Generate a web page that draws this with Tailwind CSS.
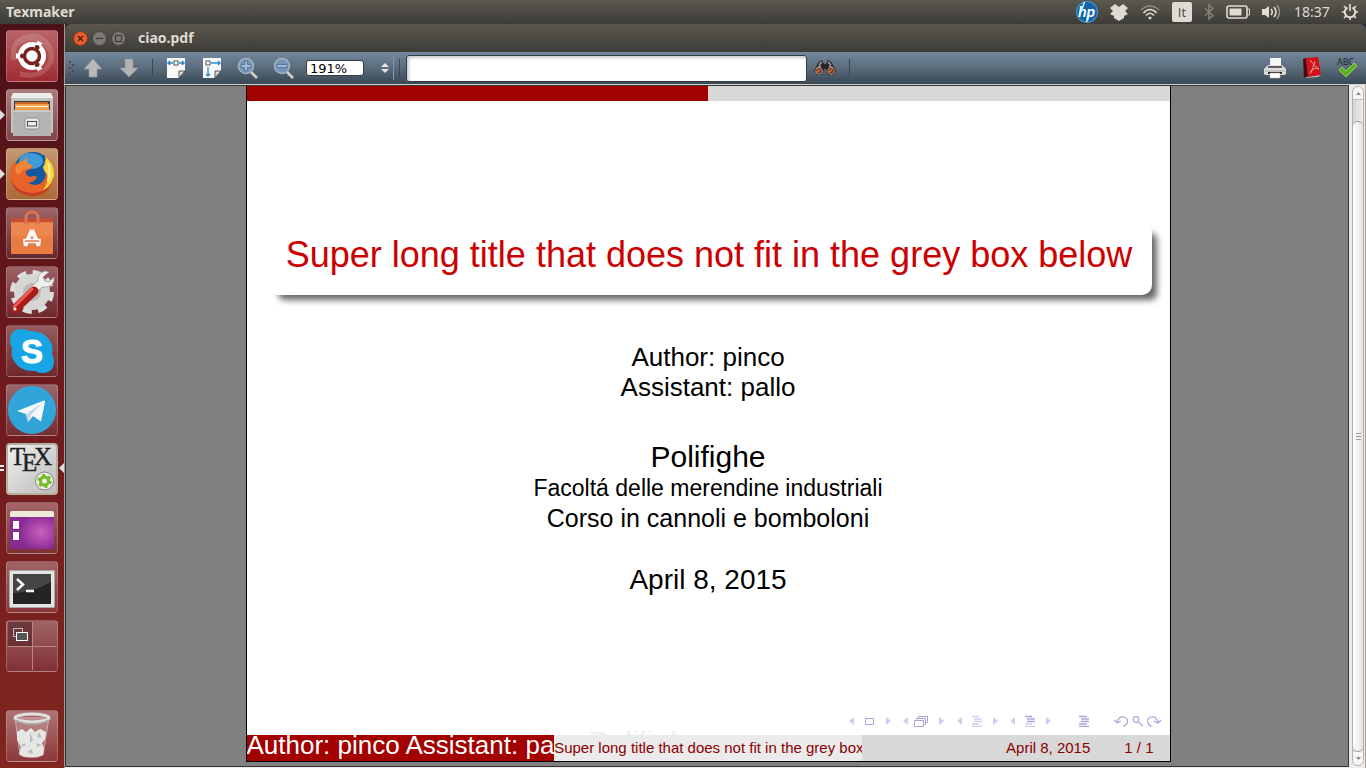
<!DOCTYPE html>
<html lang="it">
<head>
    <meta charset="UTF-8">
    <meta name="viewport" content="width=device-width, initial-scale=1.0">
    <title>Texmaker - ciao.pdf</title>
    <script src="https://cdn.jsdelivr.net/npm/@tailwindcss/browser@4"></script>
</head>
<body class="h-screen flex flex-col overflow-hidden bg-[#3c3b37] font-['Noto_Sans',sans-serif]">
    <!-- Top panel -->
    <header class="h-6 shrink-0 flex items-center justify-between pl-[6px] pr-2 bg-linear-to-b from-[#5b5850] to-[#3d3c37] text-[#dfdbd2]">
        <h1 class="text-[14px] leading-6 font-bold">Texmaker</h1>
        <div class="flex items-center gap-3">
            <svg class="w-[22px] h-[22px]" viewBox="0 0 22 22"><circle cx="11" cy="11" r="11" fill="#4d94cb"/><circle cx="11" cy="11" r="10" fill="#0f66ad"/><path d="M8.500 1 6 8M13 14 10.500 21" stroke="#e8f2fa" stroke-width="1.500"/><text x="10.500" y="15.500" text-anchor="middle" font-family="Liberation Sans" font-style="italic" font-weight="bold" font-size="14" fill="#fff">hp</text></svg>
            <svg class="w-[18px] h-[18px]" viewBox="0 0 18 18" fill="#dfdbd2"><path d="M5 1 9 4 13 1 18 5 15 8 18 11 14 13V15L9 18 4 15V13L0 11 3 8 0 5Z"/></svg>
            <svg class="w-5 h-5" viewBox="0 0 20 20" fill="none" stroke="#dfdbd2" stroke-width="1.6"><path d="M1 8Q10 0 19 8" stroke="#8f8c84"/><path d="M3.500 11Q10 4 16.500 11"/><path d="M6 13.500Q10 9 14 13.500"/><path d="M8 15.500 10 18 12 15.500Q10 14 8 15.500Z" fill="#dfdbd2" stroke="none"/></svg>
            <span class="w-5 h-5 rounded-xs bg-[#dfdbd2] text-[#45443f] text-[13px] leading-5 text-center font-['Open_Sans',sans-serif]">It</span>
            <svg class="w-[10px] h-4" viewBox="0 0 10 16" fill="none" stroke="#85827a" stroke-width="1.5"><path d="M1 4.500 9 11.500 5 15V1L9 4.500 1 11.500"/></svg>
            <svg class="w-6 h-[14px]" viewBox="0 0 24 14"><rect x="1" y="1" width="20" height="12" rx="2" fill="none" stroke="#dfdbd2" stroke-width="1.6"/><rect x="3.500" y="3.500" width="12" height="7" fill="#dfdbd2"/><path d="M21 4H23.500V10H21" fill="none" stroke="#dfdbd2"/></svg>
            <svg class="w-5 h-4" viewBox="0 0 20 16"><path d="M0 5H3L7 2V14L3 11H0Z" fill="#dfdbd2"/><path d="M9 5Q11.500 8 9 11M12 3Q16 8 12 13" fill="none" stroke="#dfdbd2" stroke-width="1.6"/><path d="M15 1Q20 8 15 15" fill="none" stroke="#99968d" stroke-width="1.4"/></svg>
            <time class="w-9 text-[14px] leading-6">18:37</time>
            <svg class="w-4 h-4" viewBox="0 0 16 16" fill="none" stroke="#dfdbd2"><path d="M5.500 3.500A5.200 5.200 0 1 0 10.500 3.500" stroke-width="2"/><path d="M8 0V7M0 8H3M13 8H16M8 13V16M2 2 4 4M14 2 12 4M2 14 4.500 11.500M14 14 11.500 11.500" stroke-width="1.700"/></svg>
        </div>
    </header>

    <div class="flex flex-1 min-h-0">
        <!-- Launcher -->
        <nav class="relative w-[65px] shrink-0 flex flex-col gap-[7px] px-[6px] py-[6px] bg-linear-to-b from-[#4b1116] via-[#701a1e] to-[#80261f] border-r border-[#a69792]">
            <button class="size-[52px] shrink-0 rounded-[4px] border border-white/20 bg-linear-to-b from-[#b86468] to-[#a02a31]" aria-label="Dash">
                <svg class="size-[50px]" viewBox="1 1 50 50" fill="none"><path d="M8 30Q4 6 30 6Q48 12 45 34M14 44Q40 50 46 26M10 14Q30 0 44 20" stroke="#fff" stroke-opacity=".15" stroke-width="5"/><circle cx="26" cy="26" r="14" fill="#fff"/><circle cx="26" cy="26" r="7.500" stroke="#772022" stroke-width="3.500"/><path d="M18 26H10M30 19 34 12M30 33 34 40" stroke="#fff" stroke-width="5"/><circle cx="16.500" cy="26" r="2.500" fill="#772022"/><circle cx="31" cy="17.500" r="2.500" fill="#772022"/><circle cx="31" cy="34.500" r="2.500" fill="#772022"/></svg>
            </button>
            <button class="size-[52px] shrink-0 rounded-[4px] border border-white/25 bg-linear-to-b from-[#ac7b7a] to-[#82464a]" aria-label="File">
                <svg class="size-[50px]" viewBox="1 1 50 50"><path d="M7 4H45L47 9V44H5V9Z" fill="#c3c3c1"/><path d="M7 4H45L47 9H5Z" fill="#ededeb"/><rect x="8" y="12" width="36" height="13" fill="#3c3b37"/><rect x="9" y="13" width="33" height="8" fill="#c9672c"/><rect x="9" y="15" width="34" height="8" fill="#f0a04d"/><path d="M10 17.500H42" stroke="#fff3d8"/><path d="M7 21H45V47H7Z" fill="#b4b4b2"/><path d="M7 22H45" stroke="#ddd"/><rect x="19" y="29" width="14" height="11" rx="2" fill="#e7e7e7" stroke="#909090"/><rect x="21.500" y="32.500" width="9" height="4.500" fill="#eee" stroke="#444"/></svg>
            </button>
            <button class="size-[52px] shrink-0 rounded-[4px] border border-white/25 bg-linear-to-b from-[#c39871] to-[#ab6937]" aria-label="Firefox">
                <svg class="size-[50px]" viewBox="1 1 50 50"><circle cx="27" cy="23" r="19" fill="#1459a0"/><ellipse cx="25" cy="13" rx="12" ry="8" fill="#3c9bd8"/><path d="M42 9Q50 20 47 32Q42 48 26 48Q8 47 4 30Q3 20 9 13L10 17Q14 13 17 13L21 9V15L27 18Q26 21 20 23Q19 27 24 29Q28 27 31 29Q29 34 22 35Q32 40 38 32Q42 24 38 14Z" fill="#e8622a"/><path d="M39 8Q49 16 48 28L45 35Q42 40 37 42Q43 34 41 26Q38 24 37 19Q41 14 39 8Z" fill="#fbd338"/><path d="M42 15Q45 24 42 33" fill="none" stroke="#fff0a0" stroke-width="2"/><path d="M4 30Q10 45 28 45Q40 44 46 35Q41 48 26 48Q8 47 4 30Z" fill="#c33f20"/><path d="M10 17Q14 13 17 13L21 9V15L27 18Q24 21 18 21L12 27Q8 24 10 17Z" fill="#f08636"/></svg>
            </button>
            <button class="size-[52px] shrink-0 rounded-[4px] border border-white/20 bg-linear-to-b from-[#9b6668] to-[#62272b]" aria-label="Ubuntu Software Center">
                <svg class="size-[50px]" viewBox="1 1 50 50"><path d="M5 11H47V47H5Z" fill="#e97a42"/><path d="M5 11H47V15H5Z" fill="#c15132"/><path d="M5 16H47V29H5Z" fill="#ed8752"/><path d="M20 17V11Q20 5 26 5Q32 5 32 11V17" fill="none" stroke="#dc7353" stroke-width="3"/><path d="M26 23 19 39M26 23 33 39" fill="none" stroke="#fff" stroke-width="4"/><path d="M18 32.500H34V35.500H18Z" fill="#e97a42" stroke="#fff" stroke-width="1.500"/></svg>
            </button>
            <button class="size-[52px] shrink-0 rounded-[4px] border border-white/20 bg-linear-to-b from-[#9c6266] to-[#6d282d]" aria-label="Impostazioni">
                <svg class="size-[50px]" viewBox="1 1 50 50"><circle cx="26" cy="26" r="18.500" fill="none" stroke="#dededc" stroke-width="7" stroke-dasharray="8.500 6.030"/><circle cx="26" cy="26" r="13" fill="none" stroke="#d6d6d4" stroke-width="10"/><circle cx="26" cy="26" r="9" fill="#b9b9b7"/><path d="M29 28 23 22 32 15Q31 7 39 5L43 6 37 11 39 15 43 16 48 11Q49 19 41 21L36 21Z" fill="#efefed" stroke="#999" stroke-width=".8"/><path d="M9 43 28 25" stroke="#a91c18" stroke-width="9" stroke-linecap="round"/><path d="M8 41 26 23" stroke="#eb5d53" stroke-width="3" stroke-linecap="round"/><circle cx="9" cy="43" r="1.500" fill="#fff"/></svg>
            </button>
            <button class="size-[52px] shrink-0 rounded-[4px] border border-white/20 bg-linear-to-b from-[#975c60] to-[#6d282c]" aria-label="Skype">
                <svg class="size-[50px]" viewBox="1 1 50 50"><path d="M4 16Q4 4 16 4Q20 4 23 6Q40 5 46 20Q47 25 46 29Q48 32 48 36Q48 48 36 48Q32 48 29 46Q12 47 6 32Q5 27 6 23Q4 20 4 16Z" fill="#18a5e3"/><text x="26" y="37.500" text-anchor="middle" font-family="Liberation Sans" font-weight="bold" font-size="33" fill="#fff" stroke="#fff">S</text></svg>
            </button>
            <button class="size-[52px] shrink-0 rounded-[4px] border border-white/20 bg-linear-to-b from-[#98676a] to-[#742c30]" aria-label="Telegram">
                <svg class="size-[50px]" viewBox="1 1 50 50"><circle cx="26" cy="26" r="24" fill="#31a5da"/><path d="M11 27 38 16.500Q39.500 16.500 39 18L35 37.500 27 32 22 38 20 30Z" fill="#f5f8fa"/><path d="M20 30 36 19 25 31 22 38Z" fill="#c5d8e4"/></svg>
            </button>
            <button class="size-[52px] shrink-0 rounded-[4px] border-2 border-[#b6ae9f] bg-linear-to-br from-[#f0f0ef] to-[#bbbbb9]" aria-label="Texmaker">
                <svg class="size-[48px]" viewBox="2 2 48 48"><g font-family="Liberation Serif" font-size="25" fill="#222" stroke="#222" stroke-width=".4"><text x="4" y="22">T</text><text x="16" y="28">E</text><text x="28" y="22">X</text></g><circle cx="38.500" cy="38" r="9" fill="#eee" stroke="#888"/><circle cx="38.500" cy="38" r="4" fill="none" stroke="#75bd22" stroke-width="3"/><circle cx="38.500" cy="38" r="6" fill="none" stroke="#75bd22" stroke-width="2.500" stroke-dasharray="3 3.280"/></svg>
            </button>
            <button class="size-[52px] shrink-0 rounded-[4px] border border-white/20 bg-linear-to-b from-[#a26669] to-[#7d3135]" aria-label="Desktop">
                <svg class="size-[50px]" viewBox="1 1 50 50"><defs><radialGradient id="wall" cx=".7" cy=".55"><stop offset="0" stop-color="#c961bb"/><stop offset="1" stop-color="#882a92"/></radialGradient></defs><rect x="4" y="10" width="44" height="37" rx="2" fill="url(#wall)"/><path d="M4 15V11Q4 9 6 9H46Q48 9 48 11V15Z" fill="#eeeadb"/><path d="M7 19H13V27H7ZM7 30H13V38H7Z" fill="#fff"/></svg>
            </button>
            <button class="size-[52px] shrink-0 rounded-[4px] border border-white/20 bg-linear-to-b from-[#a26365] to-[#863438]" aria-label="Terminale">
                <svg class="size-[50px]" viewBox="1 1 50 50"><rect x="3.500" y="9.500" width="45" height="37" rx="1" fill="#e4e4e2" stroke="#aaa"/><rect x="7" y="13" width="38" height="30" fill="#242522"/><path d="M7 13H45V21Q26 32 7 32Z" fill="#454643"/><path d="M11 18 17 23.500 11 29M20 30H28" fill="none" stroke="#fff" stroke-width="2.500"/></svg>
            </button>
            <button class="size-[52px] shrink-0 rounded-[4px] border border-white/20 bg-linear-to-b from-[#a06466] to-[#803034]" aria-label="Aree di lavoro">
                <svg class="size-[50px]" viewBox="1 1 50 50" fill="none"><rect x="2" y="2" width="24" height="25" fill="#4c2024" fill-opacity=".6"/><path d="M26.500 2V50M2 26.500H50" stroke="#bd8586"/><rect x="7.500" y="8.500" width="9" height="8" stroke="#bbb"/><rect x="10.500" y="12.500" width="11" height="8" fill="#555" stroke="#fff"/></svg>
            </button>
            <button class="size-[52px] shrink-0 mt-auto rounded-[4px] border border-white/20 bg-linear-to-b from-[#ad7374] to-[#8d373a]" aria-label="Cestino">
                <svg class="size-[50px]" viewBox="1 1 50 50"><path d="M9 8 14 45Q26 50 37 45L43 8Z" fill="#e5dada" fill-opacity=".25" stroke="#d9c9c9" stroke-width=".7"/><path d="M11 22 16 19 20 22 25 18 29 22 34 19 40 22 39 29 36 33 38 38 37 45 31 47H18L13 44 15 37 11 30Z" fill="#e6e6e4"/><path d="M24 22 27 30 24 33ZM15 35 20 33 18 37ZM30 33 36 35 31 37ZM21 42 26 39 27 44ZM33 22 36 28 31 27Z" fill="#bcbcba"/><ellipse cx="26" cy="8" rx="17" ry="4" fill="none" stroke="#e1e1df" stroke-width="3"/><path d="M9 10Q26 18 43 10" fill="none" stroke="#aaa" stroke-width="1.500"/></svg>
            </button>

            <!-- Running markers -->
            <svg class="absolute left-0 top-[86px] w-[5px] h-[10px]" viewBox="0 0 5 10"><path d="M0 0 5 5 0 10Z" fill="#dedede"/></svg>
            <svg class="absolute left-0 top-[145px] w-[5px] h-[10px]" viewBox="0 0 5 10"><path d="M0 0 5 5 0 10Z" fill="#dedede"/></svg>
            <svg class="absolute left-0 top-[439px] w-[5px] h-[10px]" viewBox="0 0 5 10"><path d="M0 3H4M0 7H4" stroke="#eee" stroke-width="2"/></svg>
            <svg class="absolute right-0 top-[439px] w-[5px] h-[10px]" viewBox="0 0 5 10"><path d="M5 0 0 5 5 10Z" fill="#dedede"/></svg>
        </nav>

        <!-- PDF viewer window -->
        <section class="flex-1 min-w-0 flex flex-col bg-[#272a35]">
            <div class="h-7 shrink-0 flex items-center gap-1 pl-2 rounded-t-md bg-linear-to-b from-[#5a574f] to-[#3d3c37] text-[#dfdbd2]">
                <button class="size-[15px] rounded-full bg-[#e95c2b] border border-[#7e3519]" aria-label="Chiudi"><svg viewBox="0 0 13 13"><path d="M4 4 9 9M9 4 4 9" stroke="#3c2015" stroke-width="1.300"/></svg></button>
                <button class="size-[15px] rounded-full bg-[#7b7972] border border-[#45433d]" aria-label="Riduci"><svg viewBox="0 0 13 13"><path d="M3 6.500H10" stroke="#3c3b37" stroke-width="1.200"/></svg></button>
                <button class="size-[15px] rounded-full bg-[#7b7972] border border-[#45433d]" aria-label="Massimizza"><svg viewBox="0 0 13 13"><rect x="3.500" y="3.500" width="6" height="6" fill="none" stroke="#3c3b37" stroke-width="1.200"/></svg></button>
                <h2 class="ml-2 text-[14px] leading-7 font-bold">ciao.pdf</h2>
            </div>

            <div class="h-8 shrink-0 flex items-center bg-linear-to-b from-[#73899f] from-0% via-[#5a6b7b] via-50% to-[#394855]">
                <svg class="w-[10px] h-6 shrink-0" viewBox="0 0 10 24"><path d="M4 5h2v2H4zM4 11h2v2H4zM4 17h2v2H4zM7 8h2v2H7zM7 14h2v2H7z" fill="#3f4d5a"/></svg>
                <button class="w-9 h-8 flex items-center justify-center" aria-label="Pagina precedente"><svg class="w-5 h-5" viewBox="0 0 20 20"><path d="M10 1 19 11H14V19H6V11H1Z" fill="#b9b9b9" stroke="#8f9499" stroke-width=".7"/></svg></button>
                <button class="w-9 h-8 flex items-center justify-center" aria-label="Pagina successiva"><svg class="w-5 h-5" viewBox="0 0 20 20"><path d="M10 19 19 10H14V1H6V10H1Z" fill="#b2b2b2" stroke="#8f9499" stroke-width=".7"/></svg></button>
                <span class="w-px h-[18px] ml-[5px] mr-[5px] bg-[#3b4956]"></span>
                <button class="w-9 h-8 flex items-center justify-center" aria-label="Adatta alla larghezza"><svg class="w-[18px] h-5" viewBox="0 0 18 20"><path d="M0 0H18V13L12 20H0Z" fill="#f8f8f8"/><path d="M12 20V13H18Z" fill="#ddd" stroke="#333" stroke-width=".8"/><path d="M1 5H6M12 5H17M3 3 1 5 3 7M15 3 17 5 15 7" fill="none" stroke="#2589d8" stroke-width="1.300"/><rect x="7" y="3" width="4" height="4" fill="#fff" stroke="#555"/></svg></button>
                <button class="w-9 h-8 flex items-center justify-center" aria-label="Adatta alla pagina"><svg class="w-[18px] h-5" viewBox="0 0 18 20"><path d="M0 0H18V13L12 20H0Z" fill="#f8f8f8"/><path d="M12 20V13H18Z" fill="#ddd" stroke="#333" stroke-width=".8"/><path d="M8 5H17M15 3 17 5 15 7M5 9V18M3 16 5 18 7 16" fill="none" stroke="#2589d8" stroke-width="1.300"/><rect x="3" y="3" width="4" height="4" fill="#fff" stroke="#555"/></svg></button>
                <button class="w-9 h-8 flex items-center justify-center" aria-label="Ingrandisci"><svg class="w-[22px] h-[22px]" viewBox="0 0 22 22"><path d="M14 15 20 21" stroke="#d7d0c5" stroke-width="2.500"/><circle cx="9" cy="9" r="7.500" fill="#7593b8" stroke="#a5b4c3" stroke-width="1.500"/><path d="M4 7.500H7.500V4H10.500V7.500H14V10.500H10.500V14H7.500V10.500H4Z" fill="#a0b9d2" stroke="#4e6f98" stroke-width=".8"/></svg></button>
                <button class="w-9 h-8 flex items-center justify-center" aria-label="Riduci"><svg class="w-[22px] h-[22px]" viewBox="0 0 22 22"><path d="M14 15 20 21" stroke="#d7d0c5" stroke-width="2.500"/><circle cx="9" cy="9" r="7.500" fill="#7593b8" stroke="#a5b4c3" stroke-width="1.500"/><path d="M4 7.500H14V10.500H4Z" fill="#a0b9d2" stroke="#4e6f98" stroke-width=".8"/></svg></button>
                <input type="text" value="191%" aria-label="Zoom" class="w-[58px] h-4 ml-1 pl-[3px] rounded-[3px] border border-[#343c43] bg-white text-black text-[13px] leading-[14px] font-['DejaVu_Sans',sans-serif]">
                <button class="ml-[15px] w-3 h-8 flex items-center justify-center" aria-label="Cambia zoom"><svg class="w-2 h-[10px]" viewBox="0 0 8 10"><path d="M4 0 8 4H0ZM0 6H8L4 10Z" fill="#e5e5e5"/></svg></button>
                <span class="w-px h-6 ml-[2px] bg-[#8296a9]"></span>
                <span class="w-px h-[18px] ml-[5px] bg-[#3b4956]"></span>
                <input type="search" aria-label="Cerca" class="w-[401px] h-[27px] ml-[6px] px-1 rounded-[3px] border border-[#343c43] bg-white shadow-[inset_2px_2px_3px_#ccc] text-[13px]">
                <button class="w-9 h-8 flex items-center justify-center" aria-label="Trova"><svg class="w-[22px] h-4" viewBox="0 0 22 16"><path d="M4 3 8 0 10 4H12L14 0 18 3 22 11 19 15H14L12 9H10L8 15H3L0 11Z" fill="#282624"/><path d="M5 5 8 2M14 2 17 5M3 8 7 6M15 6 19 8" stroke="#a9a7a4" stroke-width="1.500"/><circle cx="5" cy="11" r="3.300" fill="#8c3324" stroke="#a39588"/><circle cx="17" cy="11" r="3.300" fill="#8c3324" stroke="#a39588"/><path d="M3 12 6 10M15 12 18 10" stroke="#e7a24c"/></svg></button>
                <span class="w-px h-[18px] ml-[6px] bg-[#3b4956]"></span>
                <div class="flex ml-auto pr-px">
                    <button class="w-9 h-8 flex items-center justify-center" aria-label="Stampa"><svg class="w-[22px] h-[22px]" viewBox="0 0 22 22"><path d="M6 1H17V10H6Z" fill="#f7f7f7"/><path d="M4 8H18L22 12V17L20 18H2L0 17V12Z" fill="#dedede"/><path d="M4 10H18" stroke="#333" stroke-width="1.500"/><path d="M1 14H21" stroke="#aaa"/><path d="M4 16H18" stroke="#222" stroke-width="2"/><path d="M6 16H16V21H6Z" fill="#fff" stroke="#bbb" stroke-width=".5"/></svg></button>
                    <button class="w-9 h-8 flex items-center justify-center" aria-label="Visualizzatore esterno"><svg class="w-[19px] h-[22px]" viewBox="0 0 19 22"><path d="M1 2 4 1 6 19 2 21Z" fill="#49090b"/><path d="M4 1 16 0 19 18 6 20Z" fill="#d30f17"/><path d="M2 21 6 20 19 18 16 20Z" fill="#bbb"/><path d="M8 3Q12 9 17 12M13 4Q11 12 8 17M8 15Q12 10 17 12" fill="none" stroke="#f2a8a4" stroke-width=".9"/></svg></button>
                    <button class="w-9 h-8 flex items-center justify-center" aria-label="Controllo ortografico"><svg class="w-[22px] h-[22px]" viewBox="0 0 22 22"><text x="1" y="8" font-family="Noto Sans" font-size="9" fill="#1c252d">ABC</text><path d="M3 13 6 10 10 14 18 6 21 9 10 20Z" fill="#58b51c" stroke="#a4dc68" stroke-width=".8"/></svg></button>
                </div>
            </div>

            <div class="flex-1 min-h-0 flex border-t border-[#d5d2cc] bg-[#eceae8]">
                <!-- Canvas -->
                <main class="flex-1 min-w-0 mb-px flex justify-center border border-[#353535] bg-[#808080] pl-[2px] pb-1">
                    <article class="relative w-[925px] flex flex-col border-x border-b border-black bg-white text-black font-['Liberation_Sans',Arial,sans-serif]">
                        <div class="h-[15px] shrink-0 flex">
                            <div class="w-1/2 bg-[#a30000]"></div>
                            <div class="w-1/2 bg-[#d8d8d8]"></div>
                        </div>
                        <div class="mt-[121px] ml-5 mr-[18px] h-[73px] pt-3 rounded-[10px] bg-white shadow-[8px_8px_6px_-3px_rgba(0,0,0,0.6)] text-center text-[36px] leading-[42px] whitespace-nowrap text-[#cc0000]">Super long title that does not fit in the grey box below</div>
                        <div class="mt-[47px] text-center text-[26px] leading-[30px]">
                            <p>Author: pinco</p>
                            <p>Assistant: pallo</p>
                        </div>
                        <div class="mt-[38px] text-center">
                            <p class="text-[30px] leading-[34px]">Polifighe</p>
                            <p class="text-[23px] leading-[28px]">Facoltá delle merendine industriali</p>
                            <p class="text-[25px] leading-[32px]">Corso in cannoli e bomboloni</p>
                        </div>
                        <p class="mt-[30px] text-center text-[28px] leading-[32px]">April 8, 2015</p>

                        <!-- Beamer navigation symbols -->
                        <div class="mt-auto mb-2 mr-2 flex justify-end items-center">
                            <div class="flex gap-3 mr-[25px]">
                                <a href="#" aria-label="Slide"><svg class="w-[42px] h-3" viewBox="0 0 42 12"><path d="M5 2V10L0 6ZM37 2V10L42 6Z" fill="#cfcfeb"/><path d="M16.500 3.500H24.500V9.500H16.500Z" fill="none" stroke="#a6a6dc"/></svg></a>
                                <a href="#" aria-label="Frame"><svg class="w-[42px] h-3" viewBox="0 0 42 12"><path d="M5 2V10L0 6ZM36 2V10L41 6Z" fill="#cfcfeb"/><path d="M11.500 5.500H20.500V11.500H11.500ZM13.500 5V3.500H22.500V9.500H21M15.500 3V1.500H24.500V7.500H23" fill="none" stroke="#a6a6dc"/></svg></a>
                                <a href="#" aria-label="Sottosezione"><svg class="w-[42px] h-3" viewBox="0 0 42 12"><path d="M5 2V10L0 6ZM36 2V10L41 6Z" fill="#cfcfeb"/><path d="M15 1.500H22M17 4H25M17 6.500H25M15 9H22M15 11.500H25" stroke="#cfcfeb" stroke-width="1.300"/></svg></a>
                                <a href="#" aria-label="Sezione"><svg class="w-[42px] h-3" viewBox="0 0 42 12"><path d="M4 2V10L-1 6ZM35 2V10L40 6Z" fill="#cfcfeb"/><path d="M14 1.500H21M16 4H24M16 6.500H24" stroke="#a6a6dc" stroke-width="1.300"/><path d="M14 9H21M14 11.500H24" stroke="#cfcfeb" stroke-width="1.300"/></svg></a>
                            </div>
                            <a href="#" aria-label="Presentazione" class="mr-6"><svg class="w-3 h-3" viewBox="0 0 12 12"><path d="M1 1.500H9M3 4H11M3 6.500H11M1 9H9M1 11.500H11" stroke="#a6a6dc" stroke-width="1.300"/></svg></a>
                            <a href="#" aria-label="Indietro, cerca, avanti"><svg class="w-12 h-3" viewBox="0 0 48 12" fill="none" stroke="#a6a6dc" stroke-width="1.200"><path d="M3 7Q5 1 10 2Q15 4 13 8Q12 11 9 11M0 5 3 8 7 6"/><circle cx="22" cy="4.500" r="2.800"/><path d="M24 7 29 11"/><path d="M44 7Q42 1 37 2Q32 4 34 8Q35 11 38 11M47 5 44 8 40 6"/></svg></a>
                        </div>

                        <!-- Footline -->
                        <footer class="relative h-[26px] shrink-0 flex bg-[#d8d8d8] text-[#8b0000] text-[15px] leading-[26px] whitespace-nowrap">
                            <div class="absolute left-[342px] -top-1 h-1 overflow-hidden text-[30px] leading-[22px] text-[#f0f0f0]" aria-hidden="true">Polifighe</div>
                            <div class="w-1/3 overflow-hidden bg-[#a30000] text-white text-[26px] leading-5">Author: pinco Assistant: pallo</div>
                            <div class="w-1/3 overflow-hidden bg-[#ebebeb]">Super long title that does not fit in the grey box below</div>
                            <div class="w-1/3 flex justify-end gap-[34px] pr-4">
                                <span>April 8, 2015</span>
                                <span>1 / 1</span>
                            </div>
                        </footer>
                    </article>
                </main>

                <!-- Vertical scrollbar -->
                <div class="w-[17px] shrink-0 flex flex-col pl-[3px] pr-px pt-px pb-[2px] border-r border-[#aaa49e]">
                    <div class="flex-1 flex flex-col rounded-full border border-[#b4b0ac] bg-linear-to-r from-[#d5d5d5] to-[#ededed] overflow-hidden">
                        <button class="h-[13px] shrink-0 flex items-center justify-center rounded-t-full bg-[#f6f6f6] border-b border-[#c4c0bc]" aria-label="Su"><svg class="w-[5px] h-[3px]" viewBox="0 0 5 3"><path d="M0 3 2.500 0 5 3Z" fill="#888"/></svg></button>
                        <div class="flex-1 mt-[21px] flex items-center justify-center rounded-full border-y border-[#98938e] bg-linear-to-r from-white to-[#e3e3e3]"><svg class="w-[5px] h-2" viewBox="0 0 5 8"><path d="M0 .5H5M0 3.500H5M0 6.500H5" stroke="#999"/></svg></div>
                        <button class="h-[13px] shrink-0 flex items-center justify-center bg-[#f6f6f6]" aria-label="Giù"><svg class="w-[5px] h-[3px]" viewBox="0 0 5 3"><path d="M0 0H5L2.500 3Z" fill="#888"/></svg></button>
                    </div>
                </div>
            </div>
        </section>
    </div>
</body>
</html>
